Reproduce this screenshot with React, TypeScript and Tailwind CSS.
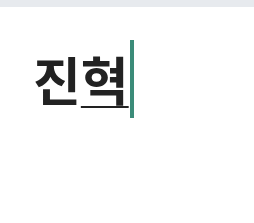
export default function App() {
  return (
    <div className="w-[254px] h-[223px] bg-white font-['Noto_Sans_CJK_KR','Noto_Sans',sans-serif]">
      <div className="h-[7px] bg-[#e7eaee]" />
      <div className="flex items-stretch pl-[33px] pt-[33px]">
        <p className="text-[52px] leading-[78px] font-bold text-[#222222] whitespace-pre">
          진<span className="underline decoration-[2px] decoration-[#222222] underline-offset-[5px]">혁</span>
        </p>
        <span className="ml-[1px] w-[4px] h-[78px] bg-[#3b8c79]" />
      </div>
    </div>
  )
}
